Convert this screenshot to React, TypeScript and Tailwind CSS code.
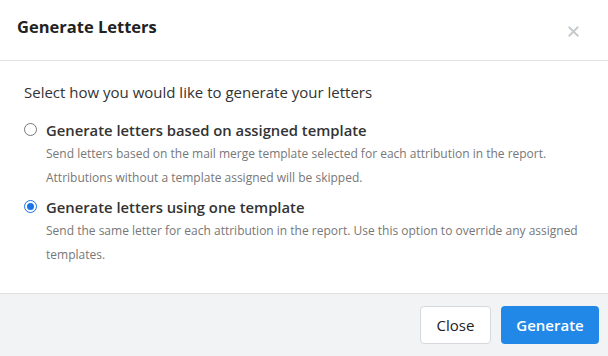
import { X } from 'lucide-react'

const options = [
  {
    label: 'Generate letters based on assigned template',
    desc: 'Send letters based on the mail merge template selected for each attribution in the report. Attributions without a template assigned will be skipped.',
    checked: false,
  },
  {
    label: 'Generate letters using one template',
    desc: 'Send the same letter for each attribution in the report. Use this option to override any assigned templates.',
    checked: true,
  },
]

export default function App() {
  return (
    <div className="w-[608px] h-[356px] bg-white flex flex-col text-[#333]" style={{ fontFamily: "'Open Sans', 'Noto Sans', sans-serif" }}>
      {/* Header */}
      <div className="h-[61px] flex items-center justify-between pl-[17px] pr-[26px] border-b border-[#e3e3e3]">
        <h2 className="text-[16.5px] font-bold text-[#222] -mt-[6px]">Generate Letters</h2>
        <X size={17} strokeWidth={2.5} className="text-[#c5c9cd] mt-[2px]" />
      </div>

      {/* Body */}
      <div className="flex-1 pl-[24px] pr-[24px] pt-[20px]">
        <p className="text-[15px] leading-[22px] text-[#333]">Select how you would like to generate your letters</p>
        <div className="mt-[16px] flex flex-col gap-[6px]">
          {options.map((o, i) => (
            <label key={i} className="flex items-start gap-[9px]">
              <span className="mt-[4px] w-[13px] h-[13px] shrink-0 flex items-center justify-center">
                {o.checked ? (
                  <span className="w-[13px] h-[13px] rounded-full border-[1.5px] border-[#1a73e8] flex items-center justify-center">
                    <span className="w-[7px] h-[7px] rounded-full bg-[#1a73e8]" />
                  </span>
                ) : (
                  <span className="w-[13px] h-[13px] rounded-full border border-[#767676]" />
                )}
              </span>
              <div>
                <div className="text-[14.8px] leading-[22px] font-semibold text-[#333]">{o.label}</div>
                <p className="text-[12px] leading-[24px] text-[#777] mt-[1px]">{o.desc}</p>
              </div>
            </label>
          ))}
        </div>
      </div>

      {/* Footer */}
      <div className="h-[63px] bg-[#f2f3f5] border-t border-[#e0e0e0] flex items-center justify-end gap-[10px] pr-[9px]">
        <button className="w-[71px] h-[38px] bg-white border border-[#d5d8dc] rounded-[4px] text-[15px] text-[#222]">Close</button>
        <button className="w-[98px] h-[38px] bg-[#2288e8] rounded-[4px] text-[15px] font-semibold text-white">Generate</button>
      </div>
    </div>
  )
}
